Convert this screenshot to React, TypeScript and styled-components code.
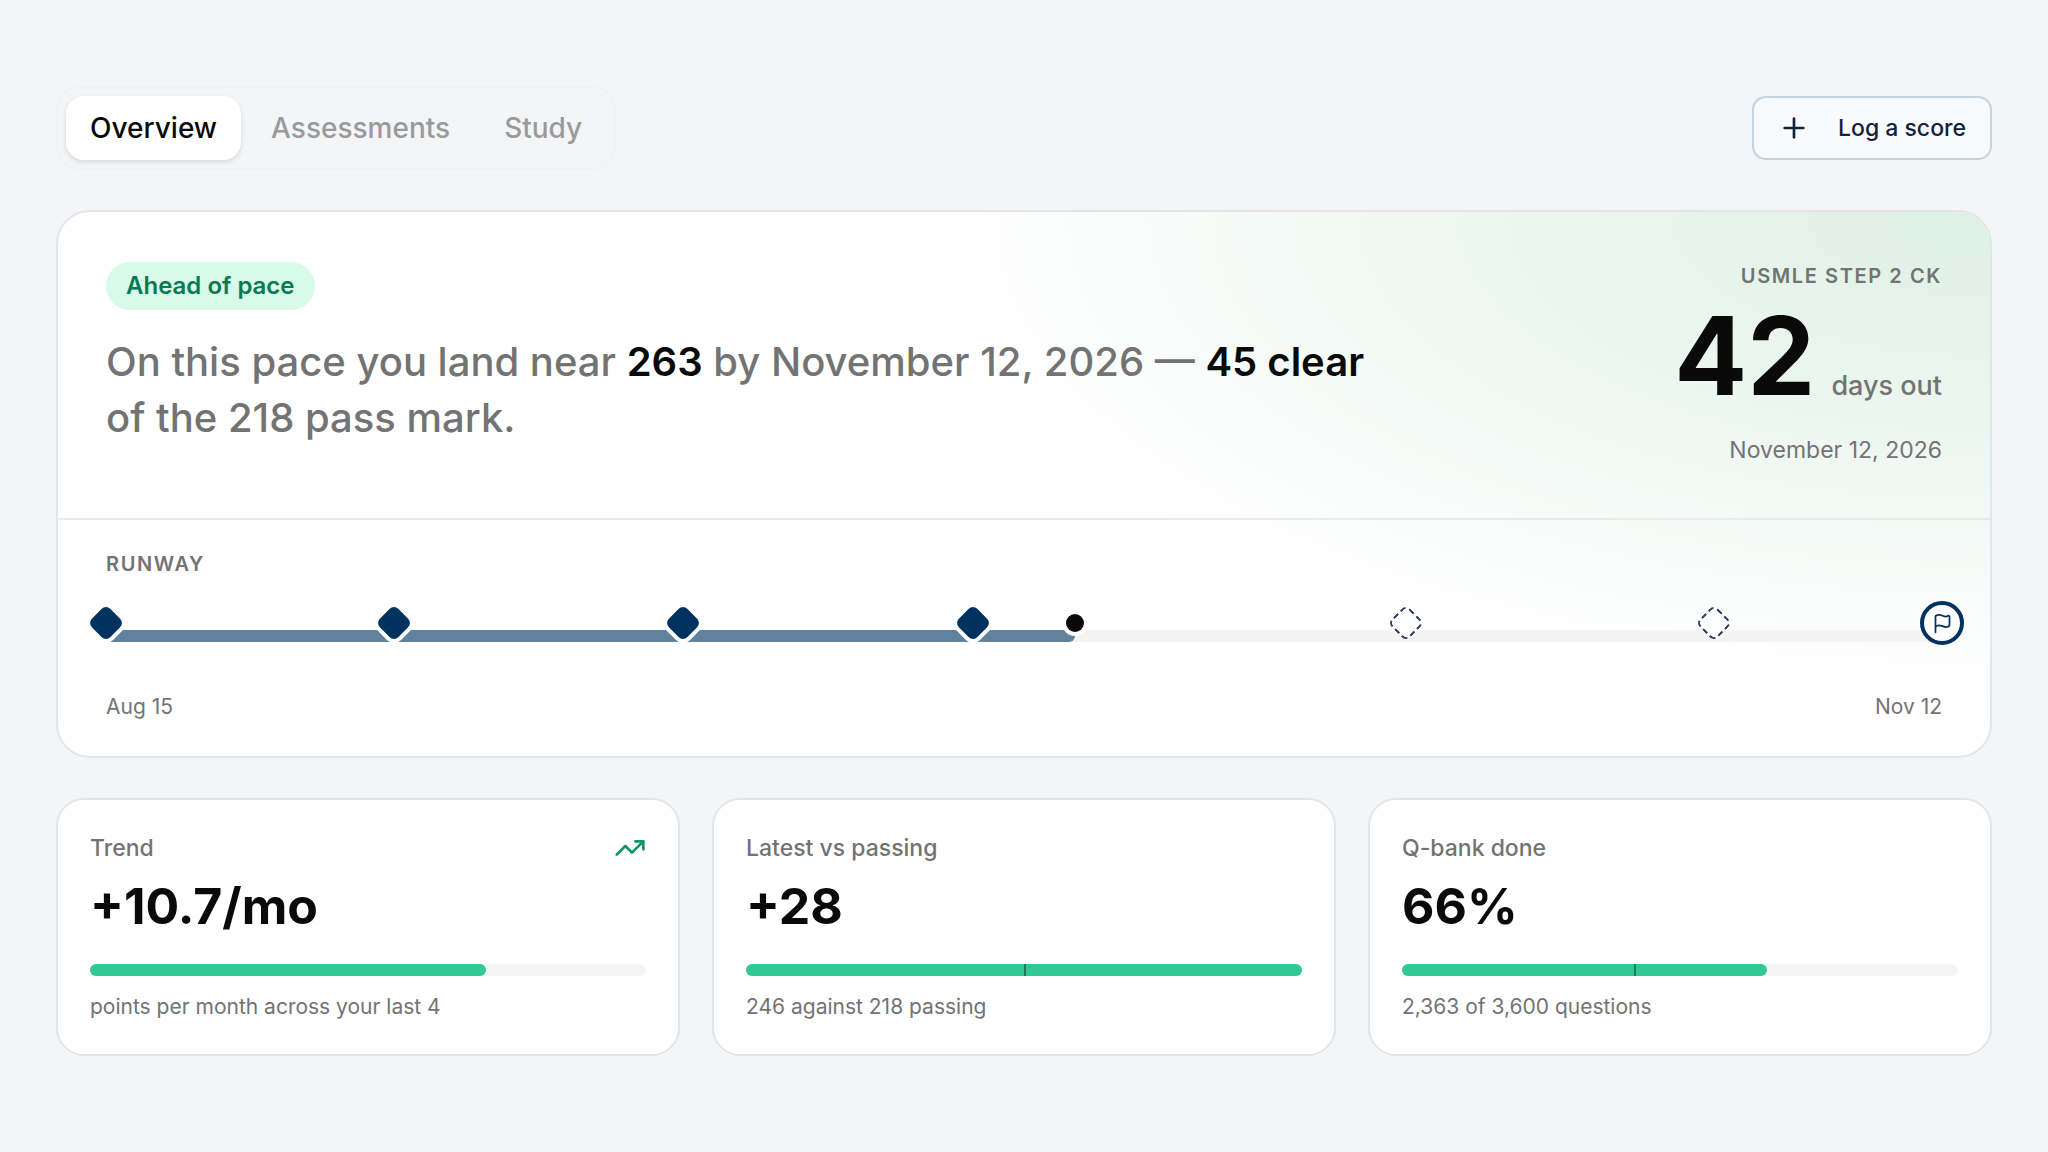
import React from "react";
import styled, { createGlobalStyle } from "styled-components";
import { Flag, Plus, TrendingUp } from "lucide-react";

const color = {
  page: "#f3f5f9",
  surface: "#ffffff",
  border: "#e5e5e5",
  ink: "#0a0a0a",
  muted: "#737373",
  faint: "#9a9a9a",
  navy: "#003260",
  navySoft: "#61829c",
  track: "#f5f5f5",
  green: "#30c894",
  greenDark: "#0d9467",
};

const GlobalStyle = createGlobalStyle`
  *, *::before, *::after { box-sizing: border-box; }
  body {
    margin: 0;
    background: ${color.page};
    color: ${color.ink};
    font-family: Inter, "Liberation Sans", sans-serif;
  }
  h2, p, dl, dd, dt { margin: 0; font-weight: inherit; }
`;

const Page = styled.main`
  display: flex;
  flex-direction: column;
  min-height: 100vh;
  padding: 86px 56px 64px;
`;

const Toolbar = styled.header`
  display: flex;
  align-items: center;
  justify-content: space-between;
  margin-bottom: 40px;
`;

const TabList = styled.nav`
  display: flex;
  gap: 6px;
  padding: 8px;
  border: 2px solid #f1f2f4;
  border-radius: 24px;
  background: #f4f5f7;
`;

const Tab = styled.button<{ $active?: boolean }>`
  height: 64px;
  padding: 0 24px;
  border: 0;
  border-radius: 18px;
  background: ${(p) => (p.$active ? color.surface : "transparent")};
  box-shadow: ${(p) => (p.$active ? "0 2px 5px rgba(0, 0, 0, 0.12)" : "none")};
  color: ${(p) => (p.$active ? color.ink : color.faint)};
  font: 500 28px/36px Inter, "Liberation Sans", sans-serif;
  cursor: pointer;
`;

const LogButton = styled.button`
  display: flex;
  align-items: center;
  gap: 28px;
  height: 64px;
  padding: 0 24px;
  border: 2px solid #c8d3e0;
  border-radius: 14px;
  background: #f9fafd;
  color: #14213a;
  font: 500 23px/32px Inter, "Liberation Sans", sans-serif;
  cursor: pointer;
`;

const Hero = styled.section`
  border: 2px solid ${color.border};
  border-radius: 34px;
  background:
    radial-gradient(56% 90% at 100% 0%, rgba(22, 150, 74, 0.14), rgba(22, 150, 74, 0)),
    ${color.surface};
  background-clip: padding-box;
`;

const Summary = styled.div`
  display: flex;
  justify-content: space-between;
  gap: 48px;
  padding: 50px 48px 52px;
`;

const Forecast = styled.div`
  display: flex;
  flex: 1;
  flex-direction: column;
  align-items: flex-start;
  gap: 24px;
  max-width: 1300px;
`;

const Status = styled.span`
  padding: 8px 20px;
  border-radius: 24px;
  background: #d8fbe9;
  color: #087a52;
  font-size: 24px;
  font-weight: 600;
  line-height: 32px;
`;

const Headline = styled.p`
  color: ${color.muted};
  font-size: 40px;
  font-weight: 500;
  line-height: 56px;

  strong { color: ${color.ink}; font-weight: 600; }
`;

const Countdown = styled.div`
  display: flex;
  flex-direction: column;
  align-items: flex-end;
`;

const Eyebrow = styled.h2`
  color: ${color.muted};
  font-size: 20px;
  font-weight: 600;
  line-height: 28px;
  letter-spacing: 0.08em;
  text-transform: uppercase;
`;

const DaysLeft = styled.p`
  display: flex;
  align-items: baseline;
  gap: 16px;
  margin-top: 18px;
  color: ${color.muted};
  font-size: 27px;
  font-weight: 500;
  line-height: 96px;

  strong { color: ${color.ink}; font-size: 108px; font-weight: 700; }
`;

const ExamDate = styled.time`
  color: ${color.muted};
  font-size: 23px;
  line-height: 32px;
`;

const Runway = styled.div`
  padding: 30px 48px 33px;
  border-top: 2px solid #e9ebea;
`;

const Timeline = styled.div`
  position: relative;
  height: 12px;
  margin: 52px 0 49px;
  border-radius: 6px;
  background: #f4f4f5;
`;

const Elapsed = styled.div`
  height: 100%;
  border-radius: 6px;
  background: ${color.navySoft};
`;

const Marker = styled.span`
  position: absolute;
  top: -7px;
  display: grid;
  transform: translate(-50%, -50%);
`;

const Diamond = styled.span<{ $planned?: boolean }>`
  width: 26px;
  height: 26px;
  border-radius: 6px;
  transform: rotate(45deg);
  background: ${(p) => (p.$planned ? color.surface : color.navy)};
  border: ${(p) => (p.$planned ? "2px dashed #2a3d5a" : "0")};
  box-shadow: ${(p) => (p.$planned ? "none" : `0 0 0 4px ${color.surface}`)};
`;

const Today = styled.span`
  width: 18px;
  height: 18px;
  border-radius: 50%;
  background: ${color.ink};
  box-shadow: 0 0 0 4px ${color.surface};
`;

const Finish = styled.span`
  display: grid;
  place-items: center;
  width: 44px;
  height: 44px;
  border: 4px solid ${color.navy};
  border-radius: 50%;
  background: ${color.surface};
  color: ${color.navy};
`;

const Range = styled.div`
  display: flex;
  justify-content: space-between;
  color: ${color.muted};
  font-size: 21px;
  line-height: 32px;
`;

const Stats = styled.dl`
  display: grid;
  grid-template-columns: repeat(3, 1fr);
  gap: 32px;
  margin-top: 40px;
`;

const StatCard = styled.div`
  padding: 32px;
  border: 2px solid ${color.border};
  border-radius: 28px;
  background: ${color.surface};
`;

const StatLabel = styled.dt`
  display: flex;
  align-items: center;
  justify-content: space-between;
  color: ${color.muted};
  font-size: 23px;
  font-weight: 500;
  line-height: 32px;
`;

const StatValue = styled.dd`
  font-size: 50px;
  font-weight: 700;
  line-height: 60px;
  margin-top: 12px;
`;

const Meter = styled.div`
  position: relative;
  height: 12px;
  margin: 28px 0 16px;
  border-radius: 6px;
  background: ${color.track};
`;

const MeterFill = styled.div`
  height: 100%;
  border-radius: 6px;
  background: ${color.green};
`;

const MeterGoal = styled.span`
  position: absolute;
  top: 0;
  width: 2px;
  height: 100%;
  background: #1d7a5a;
`;

const StatNote = styled.dd`
  color: ${color.muted};
  font-size: 21px;
  line-height: 30px;
`;

type MarkerKind = "taken" | "today" | "planned" | "finish";

const markers: { at: number; kind: MarkerKind; label: string }[] = [
  { at: 0, kind: "taken", label: "Assessment 1" },
  { at: 15.7, kind: "taken", label: "Assessment 2" },
  { at: 31.4, kind: "taken", label: "Assessment 3" },
  { at: 47.2, kind: "taken", label: "Assessment 4" },
  { at: 52.8, kind: "today", label: "Today" },
  { at: 70.8, kind: "planned", label: "Planned assessment 1" },
  { at: 87.6, kind: "planned", label: "Planned assessment 2" },
  { at: 100, kind: "finish", label: "Exam day" },
];

const stats: {
  label: string;
  value: string;
  note: string;
  fill: number;
  goal?: number;
  rising?: boolean;
}[] = [
  { label: "Trend", value: "+10.7/mo", note: "points per month across your last 4", fill: 71.3, rising: true },
  { label: "Latest vs passing", value: "+28", note: "246 against 218 passing", fill: 100, goal: 50 },
  { label: "Q-bank done", value: "66%", note: "2,363 of 3,600 questions", fill: 65.6, goal: 41.7 },
];

function MarkerShape({ kind }: { kind: MarkerKind }) {
  if (kind === "today") return <Today />;
  if (kind === "finish") {
    return (
      <Finish>
        <Flag size={21} strokeWidth={2} />
      </Finish>
    );
  }
  return <Diamond $planned={kind === "planned"} />;
}

export default function App() {
  const [tab, setTab] = React.useState("Overview");
  return (
    <>
      <GlobalStyle />
      <Page>
        <Toolbar>
          <TabList>
            {["Overview", "Assessments", "Study"].map((name) => (
              <Tab key={name} $active={name === tab} onClick={() => setTab(name)}>
                {name}
              </Tab>
            ))}
          </TabList>
          <LogButton>
            <Plus size={32} strokeWidth={2} />
            Log a score
          </LogButton>
        </Toolbar>

        <Hero>
          <Summary>
            <Forecast>
              <Status>Ahead of pace</Status>
              <Headline>
                On this pace you land near <strong>263</strong> by November 12, 2026 —{" "}
                <strong>45 clear</strong> of the 218 pass mark.
              </Headline>
            </Forecast>
            <Countdown>
              <Eyebrow>USMLE Step 2 CK</Eyebrow>
              <DaysLeft>
                <strong>42</strong> days out
              </DaysLeft>
              <ExamDate dateTime="2026-11-12">November 12, 2026</ExamDate>
            </Countdown>
          </Summary>
          <Runway>
            <Eyebrow>Runway</Eyebrow>
            <Timeline>
              <Elapsed style={{ width: "52.8%" }} />
              {markers.map((m) => (
                <Marker key={m.label} aria-label={m.label} role="img" style={{ left: `${m.at}%` }}>
                  <MarkerShape kind={m.kind} />
                </Marker>
              ))}
            </Timeline>
            <Range>
              <span>Aug 15</span>
              <span>Nov 12</span>
            </Range>
          </Runway>
        </Hero>

        <Stats>
          {stats.map((s) => (
            <StatCard key={s.label}>
              <StatLabel>
                {s.label}
                {s.rising && <TrendingUp size={32} strokeWidth={2} color={color.greenDark} />}
              </StatLabel>
              <StatValue>{s.value}</StatValue>
              <Meter>
                <MeterFill style={{ width: `${s.fill}%` }} />
                {s.goal !== undefined && <MeterGoal style={{ left: `${s.goal}%` }} />}
              </Meter>
              <StatNote>{s.note}</StatNote>
            </StatCard>
          ))}
        </Stats>
      </Page>
    </>
  );
}
